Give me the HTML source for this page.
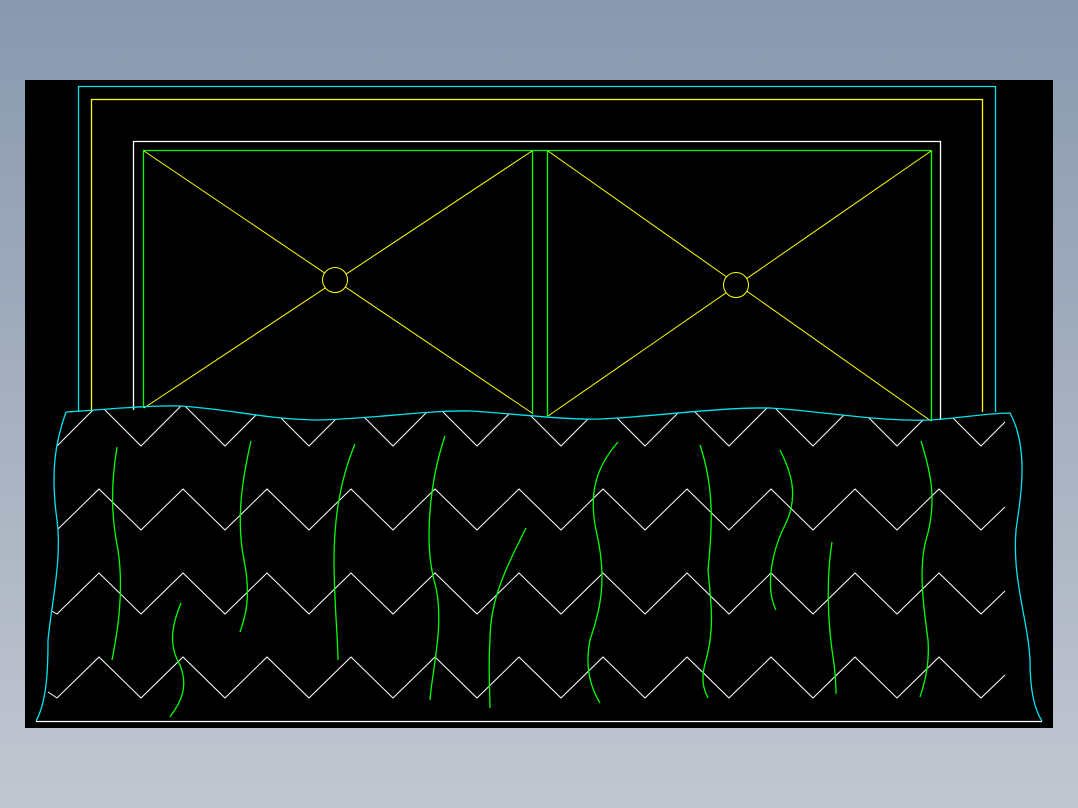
<!DOCTYPE html>
<html><head><style>
html,body{margin:0;padding:0;width:1078px;height:808px;overflow:hidden;background:linear-gradient(#8999ae,#c2c6d1);}
svg{position:absolute;left:0;top:0}
</style></head><body>
<svg width="1078" height="808" viewBox="0 0 1078 808">
<defs>
<clipPath id="c"><path d="M66,412 C100,410 150,405 180,406 C230,409 270,420 320,420 C380,418 430,410 470,411 C510,413 560,420 600,419 C650,417 720,407 770,408 C820,411 880,422 930,420 C960,418 990,413 1010,413 C1030,450 1020,500 1016,530 C1012,580 1028,620 1030,660 C1030,700 1038,715 1042,721 L36,721 C48,700 48,660 48,640 C52,600 62,560 57,520 C50,470 56,440 66,412 Z"/></clipPath>
</defs>
<rect x="25" y="80" width="1028" height="648" fill="#000"/>
<g fill="none" stroke-width="1.3">
<polyline points="78.5,412 78.5,86.5 995.5,86.5 995.5,412" stroke="#00e5ee"/>
<polyline points="91.5,412 91.5,99.5 982.5,99.5 982.5,412" stroke="#ffff00"/>
<polyline points="133.5,410 133.5,141.5 940.5,141.5 940.5,420" stroke="#ffffff"/>
<polyline points="143.5,408 143.5,150.5 931.5,150.5 931.5,421" stroke="#00ff00"/>
<line x1="532.5" y1="150" x2="532.5" y2="414" stroke="#00ff00"/>
<line x1="547.5" y1="150" x2="547.5" y2="416" stroke="#00ff00"/>
<g stroke="#ffff00" stroke-width="1">
<line x1="144" y1="151" x2="532" y2="413"/>
<line x1="532" y1="151" x2="144" y2="408"/>
<line x1="548" y1="151" x2="931" y2="421"/>
<line x1="931" y1="151" x2="548" y2="416"/>
<circle cx="335" cy="280" r="12.5" fill="#000"/>
<circle cx="736" cy="285" r="12.5" fill="#000"/>
</g>
<g stroke="#ffffff" stroke-width="1" clip-path="url(#c)">
<polyline points="57,446 99,404 141,446 183,404 225,446 267,404 309,446 351,404 393,446 435,404 477,446 519,404 561,446 603,404 645,446 687,404 729,446 771,404 813,446 855,404 897,446 939,404 981,446 1005,422"/>
<polyline points="57,530 99,489 141,530 183,489 225,530 267,489 309,530 351,489 393,530 435,489 477,530 519,489 561,530 603,489 645,530 687,489 729,530 771,489 813,530 855,489 897,530 939,489 981,530 1005,507"/>
<polyline points="50,610 57,614 99,573 141,614 183,573 225,614 267,573 309,614 351,573 393,614 435,573 477,614 519,573 561,614 603,573 645,614 687,573 729,614 771,573 813,614 855,573 897,614 939,573 981,614 1005,591"/>
<polyline points="48,692 57,698 99,657 141,698 183,657 225,698 267,657 309,698 351,657 393,698 435,657 477,698 519,657 561,698 603,657 645,698 687,657 729,698 771,657 813,698 855,657 897,698 939,657 981,698 1005,675"/>
</g>
<path d="M66,412 C100,410 150,405 180,406 C230,409 270,420 320,420 C380,418 430,410 470,411 C510,413 560,420 600,419 C650,417 720,407 770,408 C820,411 880,422 930,420 C960,418 990,413 1010,413 C1030,450 1020,500 1016,530 C1012,580 1028,620 1030,660 C1030,700 1038,715 1042,721 M36,721 C48,700 48,660 48,640 C52,600 62,560 57,520 C50,470 56,440 66,412" stroke="#00e5ee"/>
<line x1="36" y1="721.5" x2="1042" y2="721.5" stroke="#fff"/>
<g stroke="#00ff00" stroke-width="1.3">
<path d="M117,447 C110,490 112,520 118,550 C124,590 118,630 112,660"/>
<path d="M251,441 C242,480 236,520 244,560 C252,600 244,620 240,632"/>
<path d="M355,444 C340,480 334,520 334,560 C334,600 338,640 338,660"/>
<path d="M445,436 C430,480 424,540 434,580 C446,620 432,670 430,700"/>
<path d="M181,603 C172,625 168,645 180,665 C190,690 178,705 170,717"/>
<path d="M526,528 C505,570 490,600 490,640 C488,670 490,690 490,708"/>
<path d="M618,442 C598,465 588,490 596,530 C608,580 600,610 590,640 C584,670 592,690 600,703"/>
<path d="M700,445 C715,490 712,530 708,570 C712,610 714,630 706,660 C700,680 704,690 708,698"/>
<path d="M780,450 C790,470 800,495 785,525 C770,555 766,590 776,610"/>
<path d="M832,542 C826,580 828,620 832,650 C836,675 836,690 836,694"/>
<path d="M921,441 C930,470 938,500 926,540 C918,570 924,610 928,640 C930,670 922,690 920,697"/>
</g>
</g>
</svg>
</body></html>
